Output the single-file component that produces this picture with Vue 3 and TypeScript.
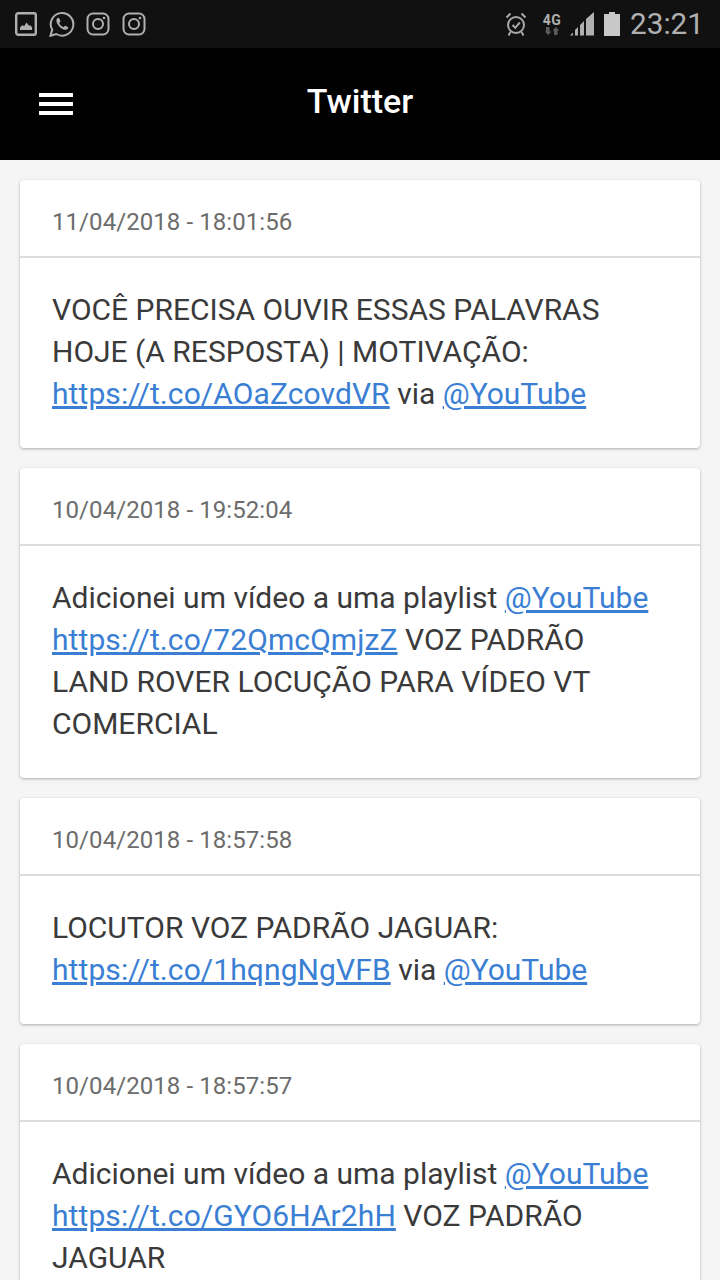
<script setup lang="ts">
type Part = { t: string; href?: boolean };
interface Tweet { date: string; lines: Part[][] }
const tweets: Tweet[] = [
  { date: '11/04/2018 - 18:01:56', lines: [
    [{ t: 'VOCÊ PRECISA OUVIR ESSAS PALAVRAS' }],
    [{ t: 'HOJE (A RESPOSTA) | MOTIVAÇÃO:' }],
    [{ t: 'https://t.co/AOaZcovdVR', href: true }, { t: ' via ' }, { t: '@YouTube', href: true }],
  ] },
  { date: '10/04/2018 - 19:52:04', lines: [
    [{ t: 'Adicionei um vídeo a uma playlist ' }, { t: '@YouTube', href: true }],
    [{ t: 'https://t.co/72QmcQmjzZ', href: true }, { t: ' VOZ PADRÃO' }],
    [{ t: 'LAND ROVER LOCUÇÃO PARA VÍDEO VT' }],
    [{ t: 'COMERCIAL' }],
  ] },
  { date: '10/04/2018 - 18:57:58', lines: [
    [{ t: 'LOCUTOR VOZ PADRÃO JAGUAR:' }],
    [{ t: 'https://t.co/1hqngNgVFB', href: true }, { t: ' via ' }, { t: '@YouTube', href: true }],
  ] },
  { date: '10/04/2018 - 18:57:57', lines: [
    [{ t: 'Adicionei um vídeo a uma playlist ' }, { t: '@YouTube', href: true }],
    [{ t: 'https://t.co/GYO6HAr2hH', href: true }, { t: ' VOZ PADRÃO' }],
    [{ t: 'JAGUAR' }],
  ] },
];
const isUrl = (s: string): boolean => s.startsWith('http');
</script>

<template>
  <div class="page">
    <div class="status">
      <div class="status-left">
        <svg class="ic-photo" width="22" height="24" viewBox="0 0 22 24"><rect x="1.200" y="1.200" width="19.600" height="21.600" rx="2" fill="none" stroke="#b0b0b0" stroke-width="2.400"/><path d="M5 18v-2.500l2.500-2.500 1.600 1.300 2.400-3.800 2.600 3.200 1-.8 2 2.600V18z" fill="#b0b0b0"/></svg>
        <svg class="ic-wa" width="26" height="26" viewBox="0 0 26 26"><path d="M1.500 24.800l1.700-6A11.300 11.300 0 1 1 7.300 23z" fill="none" stroke="#b0b0b0" stroke-width="2"/><path d="M9.300 6.800c-.7 0-1.900 1-1.900 2.700 0 4 4.700 8.900 8.800 9.300 1.900.2 3-1.200 3-2.300 0-.5-2.600-1.800-3.100-1.800-.6 0-1 1.300-1.600 1.300-1.400 0-4-2.600-4.200-4 0-.6 1.100-1 1.100-1.600 0-.5-1.100-3.600-2.100-3.600z" fill="#b0b0b0"/></svg>
        <svg class="ic-ig" width="24" height="24" viewBox="0 0 24 24"><rect x="1.500" y="1.500" width="21" height="21" rx="5.500" fill="none" stroke="#b0b0b0" stroke-width="2"/><circle cx="12" cy="12" r="5" fill="none" stroke="#b0b0b0" stroke-width="2"/><circle cx="18" cy="6" r="1.300" fill="#b0b0b0"/></svg>
        <svg class="ic-ig" width="24" height="24" viewBox="0 0 24 24"><rect x="1.500" y="1.500" width="21" height="21" rx="5.500" fill="none" stroke="#b0b0b0" stroke-width="2"/><circle cx="12" cy="12" r="5" fill="none" stroke="#b0b0b0" stroke-width="2"/><circle cx="18" cy="6" r="1.300" fill="#b0b0b0"/></svg>
      </div>
      <div class="status-right">
        <svg class="alarm" width="24" height="26" viewBox="0 0 24 26"><circle cx="12" cy="14" r="8" fill="none" stroke="#a8a8a8" stroke-width="2"/><path d="M8.500 14l2.800 2.800 4.500-5.300" fill="none" stroke="#a8a8a8" stroke-width="2"/><path d="M2.500 6.500L6.500 2.500M21.500 6.500L17.500 2.500M6.500 21l-2 3.500M17.500 21l2 3.500" stroke="#a8a8a8" stroke-width="2"/></svg>
        <div class="net">
          <span class="net-label">4G</span>
          <svg width="14" height="8" viewBox="0 0 14 8"><path d="M1 0h3.500v4.500H6.500L3 8 0 4.500h1zM7.500 3.500L11 0l3 3.500h-1.500V8H9V3.500z" fill="#5c5c5c"/></svg>
        </div>
        <svg class="signal" width="24" height="24" viewBox="0 0 24 24"><path d="M0 23.500l3-3v3zM5 23.500V18l3-3v8.500zM10 23.500V13l4-4v14.500zM16 23.500V7l8-7v23.500z" fill="#b0b0b0"/></svg>
        <svg class="battery" width="16" height="24" viewBox="0 0 16 24"><path d="M5 0h6v2h5v22H0V2h5z" fill="#c8c8c8"/></svg>
        <span class="clock">23:21</span>
      </div>
    </div>
    <header class="bar">
      <div class="burger"><i></i><i></i><i></i></div>
      <h1 class="title">Twitter</h1>
    </header>
    <main class="list">
      <article v-for="(tw, i) in tweets" :key="i" class="card">
        <div class="card-head">{{ tw.date }}</div>
        <div class="card-body">
          <div v-for="(line, j) in tw.lines" :key="j" class="line"><template v-for="(p, k) in line" :key="k"><a v-if="p.href" class="link" :class="{ url: isUrl(p.t) }">{{ p.t }}</a><span v-else>{{ p.t }}</span></template></div>
        </div>
      </article>
    </main>
  </div>
</template>

<style>
html, body { margin: 0; background: #f5f5f5; overflow: hidden; }
</style>

<style scoped>
.page { width: 720px; height: 1280px; overflow: hidden; background: #f5f5f5; font-family: Roboto, "Liberation Sans", sans-serif; }
.status { height: 48px; background: #111; display: flex; justify-content: space-between; align-items: center; padding: 0 16px 0 15px; box-sizing: border-box; }
.status-left { display: flex; align-items: center; }
.ic-wa { margin: 0 11px 0 12px; }
.ic-ig + .ic-ig { margin-left: 12px; }
.status-right { display: flex; align-items: center; }
.alarm { margin-right: 14px; }
.net { display: flex; flex-direction: column; align-items: center; width: 20px; margin-right: 8px; }
.net-label { font-size: 14px; font-weight: 700; color: #b0b0b0; line-height: 14px; letter-spacing: .5px; }
.signal { margin-right: 10px; }
.battery { margin-right: 10px; }
.clock { font-size: 29.700px; color: #b0b0b0; line-height: 48px; }
.bar { height: 112px; background: #000; display: flex; align-items: center; justify-content: center; position: relative; }
.burger { position: absolute; left: 39px; top: 45px; display: flex; flex-direction: column; gap: 5px; }
.burger i { display: block; width: 34px; height: 4px; background: #fff; }
.title { margin: 0 0 7px; color: #fff; font-size: 34px; font-weight: 500; line-height: 40px; }
.list { padding: 20px 20px 0; display: flex; flex-direction: column; gap: 20px; }
.card { background: #fff; border-radius: 4px; box-shadow: 0 1px 3px rgba(0,0,0,.3); }
.card-head { height: 76px; line-height: 84px; padding: 0 32px; color: #6c6c6c; font-size: 24px; letter-spacing: .07px; border-bottom: 2px solid #ddd; }
.card-body { padding: 31px 32px 33px; color: #3a3a3a; font-size: 30px; line-height: 42px; }
.line { white-space: pre; }
.link { color: #3b7fd4; text-decoration: underline; }
.url { letter-spacing: .09px; }
</style>
